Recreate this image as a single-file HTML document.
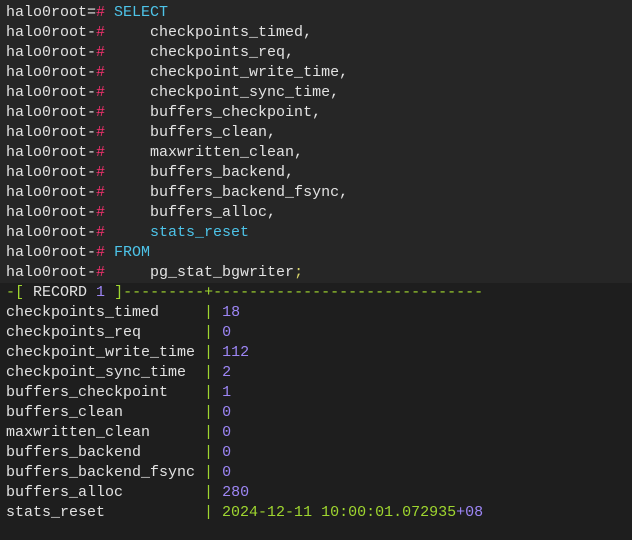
<!DOCTYPE html>
<html><head><style>
body{margin:0;width:632px;height:540px;background:#1e1e1e;overflow:hidden}
.top{position:absolute;left:0;top:0;width:632px;height:283px;background:#262626}
pre{position:absolute;left:6px;top:3px;margin:0;font-family:"Liberation Mono",monospace;font-size:15px;line-height:20px;color:#e2e2e2}
.r{color:#f5306e}.c{color:#4dc3e8}.g{color:#9fd62f}.p{color:#9d86f5}.y{color:#d8d36a}
</style></head><body><div class="top"></div>
<pre>halo0root=<span class="r">#</span> <span class="c">SELECT</span>
halo0root-<span class="r">#</span>     checkpoints_timed,
halo0root-<span class="r">#</span>     checkpoints_req,
halo0root-<span class="r">#</span>     checkpoint_write_time,
halo0root-<span class="r">#</span>     checkpoint_sync_time,
halo0root-<span class="r">#</span>     buffers_checkpoint,
halo0root-<span class="r">#</span>     buffers_clean,
halo0root-<span class="r">#</span>     maxwritten_clean,
halo0root-<span class="r">#</span>     buffers_backend,
halo0root-<span class="r">#</span>     buffers_backend_fsync,
halo0root-<span class="r">#</span>     buffers_alloc,
halo0root-<span class="r">#</span>     <span class="c">stats_reset</span>
halo0root-<span class="r">#</span> <span class="c">FROM</span>
halo0root-<span class="r">#</span>     pg_stat_bgwriter<span class="y">;</span>
<span class="g">-[</span> RECORD <span class="p">1</span> <span class="g">]---------+------------------------------</span>
checkpoints_timed     <span class="g">|</span> <span class="p">18</span>
checkpoints_req       <span class="g">|</span> <span class="p">0</span>
checkpoint_write_time <span class="g">|</span> <span class="p">112</span>
checkpoint_sync_time  <span class="g">|</span> <span class="p">2</span>
buffers_checkpoint    <span class="g">|</span> <span class="p">1</span>
buffers_clean         <span class="g">|</span> <span class="p">0</span>
maxwritten_clean      <span class="g">|</span> <span class="p">0</span>
buffers_backend       <span class="g">|</span> <span class="p">0</span>
buffers_backend_fsync <span class="g">|</span> <span class="p">0</span>
buffers_alloc         <span class="g">|</span> <span class="p">280</span>
stats_reset           <span class="g">| 2024-12-11 10:00:01.072935</span><span class="p">+08</span></pre>
</body></html>
